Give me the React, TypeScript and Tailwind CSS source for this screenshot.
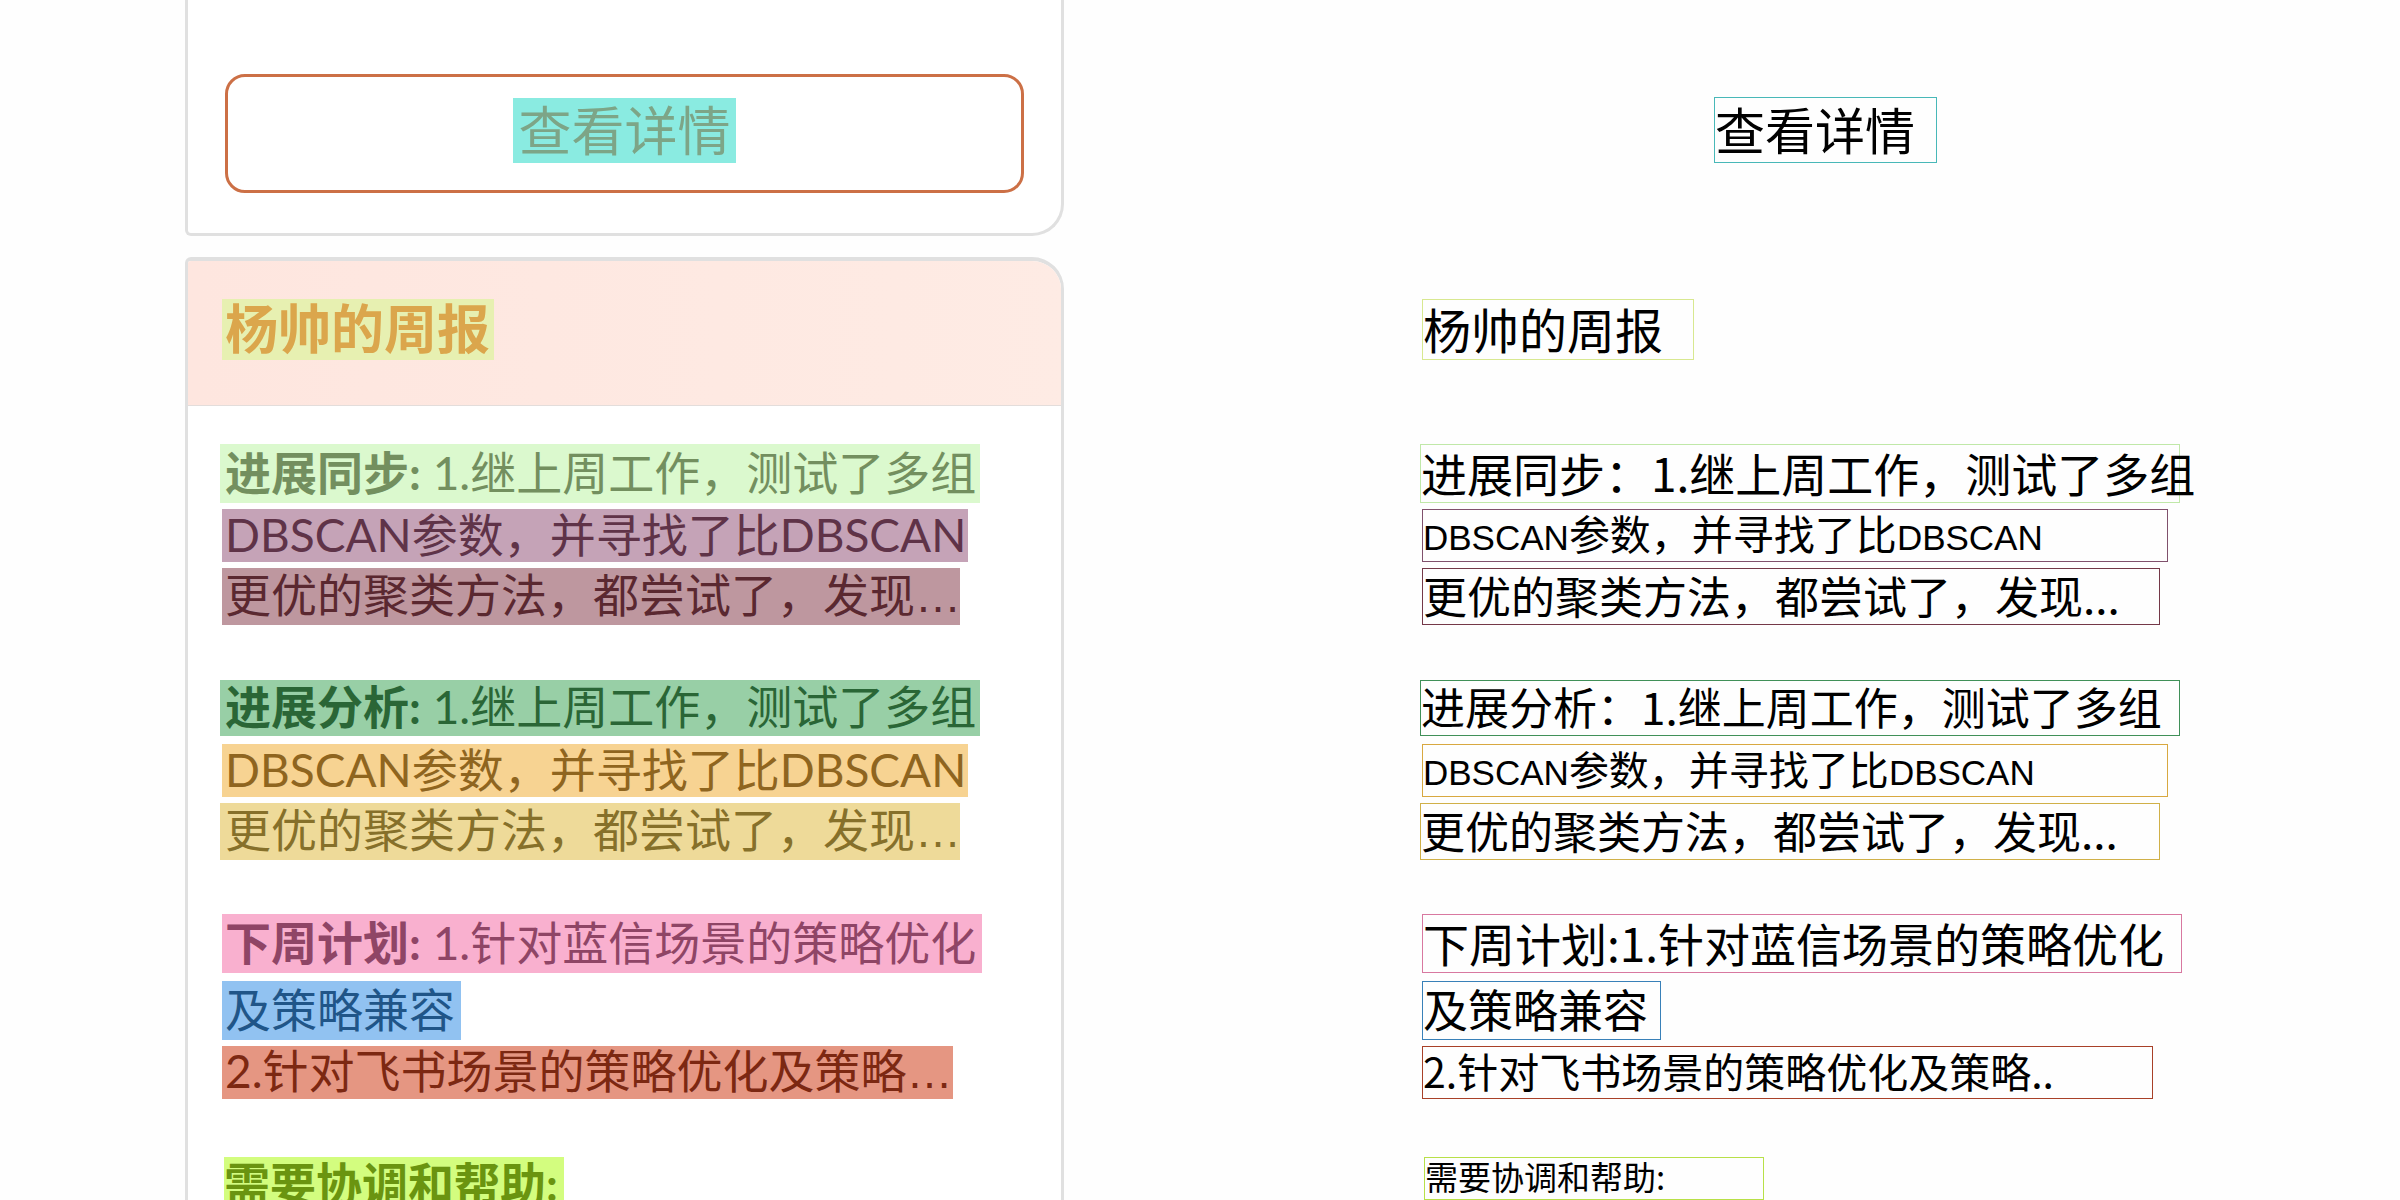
type Line = {
  label?: string;
  text: string;
  more?: boolean;
  mark: string;
  read: string;
  box: string;
  row: string;
};

const lines: Line[] = [
  {
    label: "进展同步:",
    text: " 1.继上周工作，测试了多组",
    mark: "-ml-1 w-[760px] pl-[5px] bg-[#dbf9ce] text-[#738f5f]",
    read: "进展同步：1.继上周工作，测试了多组",
    box: "-ml-0.5 w-[760px] text-[46px] border-[#c0e8a8]",
    row: "h-[59px]",
  },
  {
    text: "DBSCAN参数，并寻找了比DBSCAN",
    mark: "-ml-0.5 w-[746px] pl-[3px] bg-[#c5a3b7] text-[#5f3348]",
    read: "DBSCAN参数，并寻找了比DBSCAN",
    box: "w-[746px] text-[41px] border-[#80506c]",
    row: "mt-1.5 h-[53px]",
  },
  {
    text: "更优的聚类方法，都尝试了，发现",
    more: true,
    mark: "-ml-0.5 w-[738px] pl-[3px] bg-[#be979f] text-[#5a2830]",
    read: "更优的聚类方法，都尝试了，发现...",
    box: "w-[738px] text-[44px] border-[#743848]",
    row: "mt-1.5 h-[57px]",
  },
  {
    label: "进展分析:",
    text: " 1.继上周工作，测试了多组",
    mark: "-ml-1 w-[760px] pl-[5px] bg-[#98cfa6] text-[#2a6636]",
    read: "进展分析：1.继上周工作，测试了多组",
    box: "-ml-0.5 w-[760px] text-[44px] border-[#409058]",
    row: "mt-[55px] h-[56px]",
  },
  {
    text: "DBSCAN参数，并寻找了比DBSCAN",
    mark: "-ml-0.5 w-[746px] pl-[3px] bg-[#f7d392] text-[#8f651f]",
    read: "DBSCAN参数，并寻找了比DBSCAN",
    box: "w-[746px] text-[40px] border-[#d8a840]",
    row: "mt-2 h-[53px]",
  },
  {
    text: "更优的聚类方法，都尝试了，发现",
    more: true,
    mark: "-ml-1 w-[740px] pl-[5px] bg-[#eeda99] text-[#86702a]",
    read: "更优的聚类方法，都尝试了，发现...",
    box: "-ml-0.5 w-[740px] text-[44px] border-[#d0b048]",
    row: "mt-1.5 h-[57px]",
  },
  {
    label: "下周计划:",
    text: " 1.针对蓝信场景的策略优化",
    mark: "-ml-0.5 w-[760px] pl-[3px] bg-[#f9b0cf] text-[#8f4566]",
    read: "下周计划:1.针对蓝信场景的策略优化",
    box: "w-[760px] text-[46px] border-[#d878a0]",
    row: "mt-[54px] h-[59px]",
  },
  {
    text: "及策略兼容",
    mark: "-ml-0.5 w-[239px] pl-[3px] bg-[#91c2f1] text-[#205588]",
    read: "及策略兼容",
    box: "w-[239px] text-[45px] border-[#3880b8]",
    row: "mt-2 h-[59px]",
  },
  {
    text: "2.针对飞书场景的策略优化及策略",
    more: true,
    mark: "-ml-0.5 w-[731px] pl-[3px] bg-[#e59682] text-[#7c2812]",
    read: "2.针对飞书场景的策略优化及策略..",
    box: "w-[731px] text-[41px] border-[#a84028]",
    row: "mt-1.5 h-[53px]",
  },
];

function Marked({ line }: { line: Line }) {
  return (
    <div className={line.row}>
      <p className={`flex h-full items-center whitespace-pre pb-0.5 ${line.mark}`}>
        <span>
          {line.label && <strong className="font-bold">{line.label}</strong>}
          {line.text}
          {line.more && <span className="font-['Liberation_Sans',sans-serif]">…</span>}
        </span>
      </p>
    </div>
  );
}

function Recognized({ line }: { line: Line }) {
  return (
    <div className={line.row}>
      <p className={`flex h-full items-center whitespace-pre border pb-1 ${line.box}`}>
        <span>
          {line.read.split(/(DBSCAN)/).map((part, i) =>
            part === "DBSCAN" ? (
              <span key={i} className="font-['Liberation_Sans',sans-serif] text-[35px]">
                {part}
              </span>
            ) : (
              part
            ),
          )}
        </span>
      </p>
    </div>
  );
}

export default function App() {
  return (
    <main className="grid h-screen grid-cols-2 overflow-hidden bg-[#fefefe]">
      <div className="ml-[185px] mr-[136px] font-['Lato','Noto_Sans_CJK_SC',sans-serif] text-[46px] leading-none">
        <section className="h-[236px] rounded-br-[32px] rounded-bl-md border-[3px] border-t-0 border-[#e0e0e0] bg-white px-[37px] pt-[74px]">
          <button
            type="button"
            className="flex h-[119px] w-full items-center justify-center rounded-[20px] border-[3px] border-[#cc7046] pb-1.5 text-[53px]"
          >
            <span className="flex h-[65px] w-[223px] items-center justify-center bg-[#8aebe1] text-[#7da587]">
              查看详情
            </span>
          </button>
        </section>

        <section className="mt-[21px] overflow-hidden rounded-t-md rounded-tr-[32px] border-[3px] border-t-4 border-[#e0e0e0] bg-white">
          <header className="flex h-[145px] border-b border-[#e3dddb] bg-linear-to-r from-[#fee6df] to-[#feebe4] px-[34px] pt-[38px]">
            <h2 className="flex h-[61px] w-[272px] items-center bg-[#e7f0b1] pb-0.5 pl-[3px] text-[53px] font-bold whitespace-nowrap text-[#dba64c]">
              杨帅的周报
            </h2>
          </header>
          <div className="px-9 pt-[38px]">
            {lines.map((line, i) => (
              <Marked key={i} line={line} />
            ))}
            <p className="mt-[58px] flex h-[55px] w-[340px] items-center bg-[#d3fd7f] pb-0.5 font-bold whitespace-nowrap text-[#6a9410]">
              需要协调和帮助:
            </p>
          </div>
        </section>
      </div>

      <div className="ml-[222px] pt-[97px] font-['Noto_Sans_CJK_SC',sans-serif] leading-none text-black">
        <p className="ml-[292px] flex h-[66px] w-[223px] items-center border border-[#48b8b8] pb-1 text-[50px] whitespace-nowrap">
          查看详情
        </p>
        <h2 className="mt-[136px] mb-[84px] flex h-[61px] w-[272px] items-center border border-[#d8e890] pb-1 text-[48px] whitespace-nowrap">
          杨帅的周报
        </h2>
        {lines.map((line, i) => (
          <Recognized key={i} line={line} />
        ))}
        <p className="mt-[58px] ml-0.5 flex h-[43px] w-[340px] items-center border border-[#b8e048] pb-1 text-[33px] whitespace-nowrap">
          需要协调和帮助:
        </p>
      </div>
    </main>
  );
}
